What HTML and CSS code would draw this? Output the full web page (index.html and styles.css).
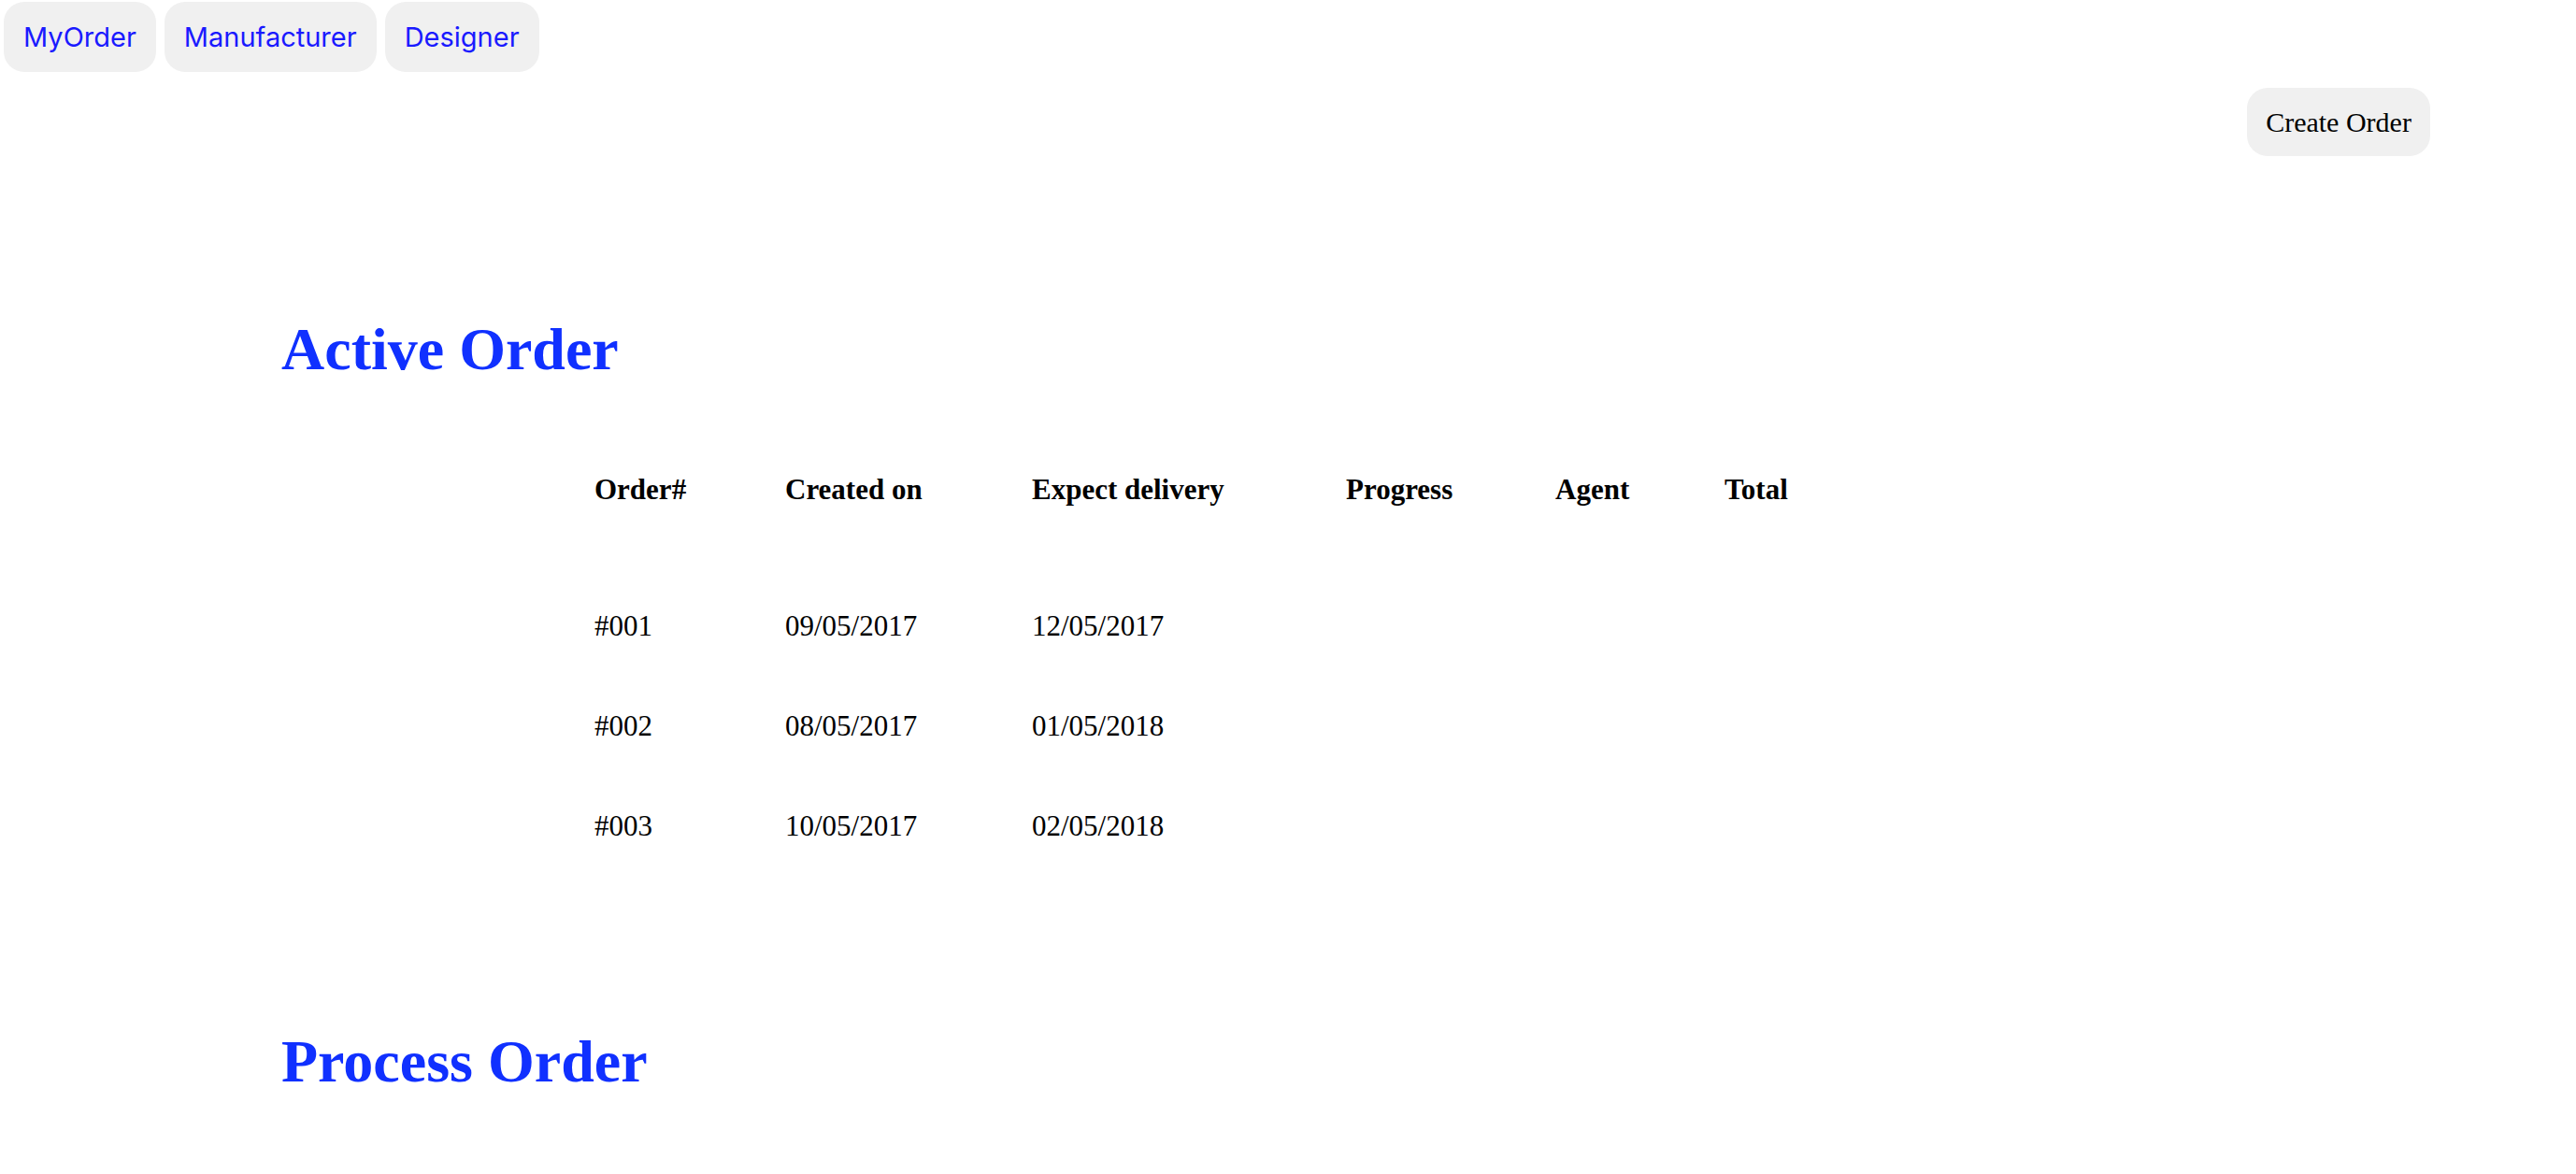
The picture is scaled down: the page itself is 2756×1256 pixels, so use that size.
FILE: index.html
```html
<!DOCTYPE html>
<html>
<head>
<meta charset="utf-8">
<title>Orders</title>
<link rel="stylesheet" href="styles.css">
</head>
<body>
<nav class="topnav">
  <a class="nav-btn" href="#">MyOrder</a>
  <a class="nav-btn" href="#">Manufacturer</a>
  <a class="nav-btn" href="#">Designer</a>
</nav>
<div class="toolbar">
  <button class="create-btn">Create Order</button>
</div>
<main class="content">
  <h1 class="section-title">Active Order</h1>
  <div class="orders">
    <div class="cell head">Order#</div>
    <div class="cell head">Created on</div>
    <div class="cell head">Expect delivery</div>
    <div class="cell head">Progress</div>
    <div class="cell head">Agent</div>
    <div class="cell head">Total</div>

    <div class="cell">#001</div>
    <div class="cell">09/05/2017</div>
    <div class="cell">12/05/2017</div>
    <div class="cell"></div>
    <div class="cell"></div>
    <div class="cell"></div>

    <div class="cell">#002</div>
    <div class="cell">08/05/2017</div>
    <div class="cell">01/05/2018</div>
    <div class="cell"></div>
    <div class="cell"></div>
    <div class="cell"></div>

    <div class="cell">#003</div>
    <div class="cell">10/05/2017</div>
    <div class="cell">02/05/2018</div>
    <div class="cell"></div>
    <div class="cell"></div>
    <div class="cell"></div>
  </div>
  <h1 class="section-title process">Process Order</h1>
</main>
</body>
</html>
```

FILE: styles.css
```css
html, body {
  margin: 0;
  padding: 0;
  background: #ffffff;
}

body {
  font-family: "Liberation Serif", "Times New Roman", serif;
  color: #000;
}

.topnav {
  display: flex;
  gap: 9px;
  padding: 2px 4px 0;
}

.nav-btn {
  display: flex;
  align-items: center;
  justify-content: center;
  height: 75px;
  padding: 0 21px;
  box-sizing: border-box;
  background: #f0f0f0;
  border-radius: 22px;
  color: #1a1aff;
  text-decoration: none;
  font-family: Inter, "Noto Sans", sans-serif;
  font-size: 29px;
}

.toolbar {
  display: flex;
  justify-content: flex-end;
  padding-right: 156px;
  margin-top: 17px;
}

.create-btn {
  height: 73px;
  width: 196px;
  padding: 0;
  border: none;
  border-radius: 22px;
  background: #f0f0f0;
  color: #000;
  font-family: "Liberation Serif", "Times New Roman", serif;
  font-size: 30px;
}

.content {
  padding-left: 301px;
}

.section-title {
  margin: 175px 0 0;
  font-size: 64px;
  line-height: 63px;
  font-weight: bold;
  color: #1030ff;
}

.section-title.process {
  margin-top: 167px;
}

.orders {
  display: grid;
  grid-template-columns: 204px 264px 336px 224px 181px 200px;
  margin: 65px 0 0 335px;
  font-size: 31px;
  line-height: 31px;
}

.cell {
  padding: 38px 0;
  white-space: nowrap;
}

.cell.head {
  font-weight: bold;
  padding-bottom: 77px;
}
```
